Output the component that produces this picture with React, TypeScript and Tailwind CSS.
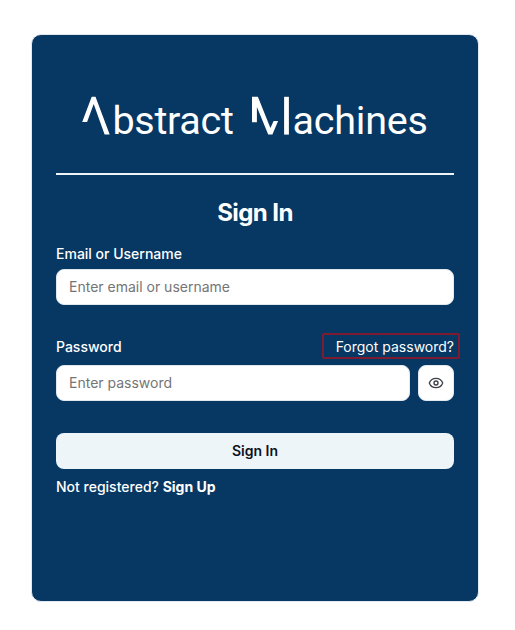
import { Eye } from "lucide-react";

function Logo() {
  return (
    <svg
      viewBox="0 0 398 60"
      className="block h-[60px] w-[398px]"
      fill="#fff"
      role="img"
      aria-label="Abstract Machines"
    >
      <path d="M26.2 37 35.7 11.8h3.8L53.7 49.6h-5.1L37.7 19 31.1 37Z" />
      <text x="56.4" y="49.3" fontSize="39.5" fontFamily="Roboto, sans-serif" textLength="121.5">
        bstract
      </text>
      <path d="M196 11.8h5.9L214.4 43 217.6 35.9h4.5L216.4 49.6h-4.2L200.9 22V37.2H196Z" />
      <path d="M228.1 11.8h4.8v37.8h-4.8Z" />
      <text x="236.4" y="49.3" fontSize="39.5" fontFamily="Roboto, sans-serif" textLength="135.5">
        achines
      </text>
    </svg>
  );
}

const inputClass =
  "h-9 min-w-0 flex-1 rounded-lg border border-slate-200 bg-white px-3 pb-0.5 text-sm text-slate-900 placeholder:text-[#757575] outline-none";

export default function App() {
  return (
    <main className="h-[630px] w-[515px] bg-white pl-[31px] pt-[34px] font-['Inter',sans-serif]">
      <section className="h-[568px] w-[448px] rounded-[10px] border border-slate-200 bg-[#073763] px-6 text-white">
        <header className="border-b-2 border-[#edf5f8] pb-7 pt-[50px]">
          <Logo />
        </header>
        <h1 className="mt-[22px] text-center text-2xl font-bold leading-8 tracking-tight">Sign In</h1>
        <form className="mt-[18px]" onSubmit={(e) => e.preventDefault()}>
          <label htmlFor="identity" className="block text-sm font-medium leading-[14px]">
            Email or Username
          </label>
          <div className="mt-2 flex">
            <input id="identity" placeholder="Enter email or username" className={inputClass} />
          </div>
          <div className="-mr-1.5 mt-7 flex h-[26px] items-center justify-between">
            <label htmlFor="password" className="pt-0.5 text-sm font-medium">
              Password
            </label>
            <a
              href="#"
              className="flex h-[26px] w-[138px] items-center justify-end rounded-xs border-2 border-[#7d1c30] pr-1 pt-0.5 text-sm"
            >
              Forgot password?
            </a>
          </div>
          <div className="mt-1.5 flex gap-2">
            <input id="password" type="password" placeholder="Enter password" className={inputClass} />
            <button
              type="button"
              aria-label="Show password"
              className="flex size-9 items-center justify-center rounded-lg border border-slate-200 bg-white text-[#3c3e48]"
            >
              <Eye size={16} />
            </button>
          </div>
          <button
            type="submit"
            className="mt-8 h-9 w-full rounded-lg bg-[#edf5f8] text-sm font-semibold text-[#0c1220]"
          >
            Sign In
          </button>
        </form>
        <p className="mt-2 text-sm font-medium">
          Not registered?{" "}
          <a href="#" className="font-bold">
            Sign Up
          </a>
        </p>
      </section>
    </main>
  );
}
